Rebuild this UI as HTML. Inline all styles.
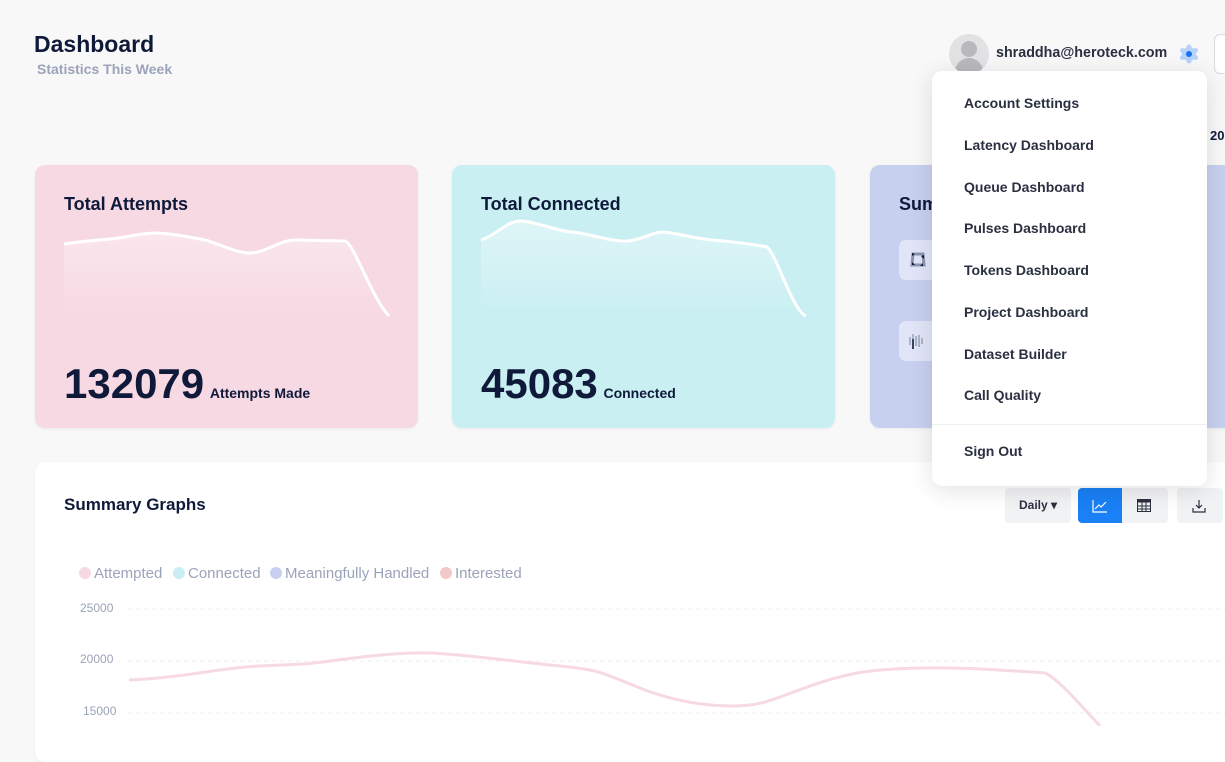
<!DOCTYPE html>
<html><head><meta charset="utf-8"><style>
*{box-sizing:border-box;margin:0;padding:0}
body{width:1225px;height:726px;overflow:hidden;background:#f8f8f9;font-family:"Liberation Sans",sans-serif;position:relative;color:#0f1a3a}
.abs{position:absolute}
.card{position:absolute;top:165px;height:263px;border-radius:10px;box-shadow:0 1px 3px rgba(0,0,0,.06)}
.ct{position:absolute;left:29px;top:29px;font-size:18px;font-weight:bold;color:#0f1a3a}
.big{position:absolute;left:29px;top:195px;font-size:42px;font-weight:bold;color:#0f1a3a;white-space:nowrap}
.big span{font-size:14px;margin-left:-6px}
.menu{position:absolute;left:932px;top:71px;width:275px;height:415px;background:#fff;border-radius:10px;box-shadow:0 4px 24px rgba(0,0,0,.12)}
.menu div{position:absolute;left:32px;font-size:14px;font-weight:bold;color:#2a3040}
.lg{position:absolute;top:565px;font-size:15px;color:#9aa3b8;white-space:nowrap}
.lg i{position:absolute;left:-15px;top:2px;width:12px;height:12px;border-radius:50%}
</style></head><body>
<div class="abs" style="left:34px;top:31px;font-size:23px;font-weight:bold;color:#0f1a3a">Dashboard</div>
<div class="abs" style="left:37px;top:61px;font-size:14px;font-weight:bold;color:#9aa3b8">Statistics This Week</div>
<div class="abs" style="left:949px;top:34px;width:40px;height:40px;border-radius:50%;background:#e2e2e4;overflow:hidden">
 <div class="abs" style="left:12px;top:7px;width:16px;height:16px;border-radius:50%;background:#b9b9bd"></div>
 <div class="abs" style="left:6px;top:24px;width:28px;height:20px;border-radius:14px 14px 0 0;background:#b9b9bd"></div></div>
<div class="abs" style="left:996px;top:45px;font-size:14.3px;font-weight:bold;color:#2a3040">shraddha@heroteck.com</div>
<svg class="abs" style="left:1179px;top:44px" width="20" height="20" viewBox="0 0 20 20"><g fill="#b8d3fb"><circle cx="10" cy="10" r="7"/><circle cx="10" cy="3" r="2.5"/><circle cx="10" cy="17" r="2.5"/><circle cx="3.5" cy="6.5" r="2.5"/><circle cx="16.5" cy="6.5" r="2.5"/><circle cx="3.5" cy="13.5" r="2.5"/><circle cx="16.5" cy="13.5" r="2.5"/></g><circle cx="10" cy="10" r="3" fill="#1a73f0"/></svg>
<div class="abs" style="left:1214px;top:34px;width:30px;height:40px;border:1px solid #d8dbe2;border-radius:6px;background:#fff"></div>
<div class="abs" style="left:1210px;top:128px;font-size:13px;font-weight:bold">20</div>

<div class="card" style="left:35px;width:383px;background:#f7d9e3">
 <div class="ct">Total Attempts</div>
 <svg class="abs" style="left:0;top:0" width="383" height="263"><defs><linearGradient id="g1" x1="0" y1="0" x2="0" y2="1"><stop offset="0" stop-color="#fff" stop-opacity=".35"/><stop offset="1" stop-color="#fff" stop-opacity="0"/></linearGradient></defs>
 <path d="M29 79 C50 76 60 75 75 74 S105 68 120 68 S160 73 170 75 S200 88 215 88 S245 75 260 75 L310 76 C320 80 335 130 354 151 L354 150 L29 150Z" fill="url(#g1)"/>
 <path d="M29 79 C50 76 60 75 75 74 S105 68 120 68 S160 73 170 75 S200 88 215 88 S245 75 260 75 L310 76 C320 80 335 130 354 151" fill="none" stroke="#fff" stroke-width="3"/></svg>
 <div class="big">132079 <span>Attempts Made</span></div>
</div>
<div class="card" style="left:452px;width:383px;background:#c9eff2">
 <div class="ct">Total Connected</div>
 <svg class="abs" style="left:0;top:0" width="383" height="263"><defs><linearGradient id="g2" x1="0" y1="0" x2="0" y2="1"><stop offset="0" stop-color="#fff" stop-opacity=".4"/><stop offset="1" stop-color="#fff" stop-opacity="0"/></linearGradient></defs>
 <path d="M29 75 C45 70 55 55 70 56 S105 66 120 67 S160 77 175 76 S200 67 210 67 S245 74 260 75 S300 79 315 82 C325 90 340 145 354 151 L29 151Z" fill="url(#g2)"/>
 <path d="M29 75 C45 70 55 55 70 56 S105 66 120 67 S160 77 175 76 S200 67 210 67 S245 74 260 75 S300 79 315 82 C325 90 340 145 354 151" fill="none" stroke="#fff" stroke-width="3"/></svg>
 <div class="big">45083 <span>Connected</span></div>
</div>
<div class="card" style="left:870px;width:400px;background:#c8d0f0">
 <div class="ct">Summ</div>
 <div class="abs" style="left:29px;top:75px;width:40px;height:40px;background:#e0e5f7;border-radius:7px"><svg style="margin:11px 0 0 10px" width="18" height="18"><path d="M4 3H14L15 14H3Z" fill="none" stroke="#8a95b0" stroke-width="3"/><path d="M3 2L6 3L3 5ZM15 4L15 8L12 5ZM14 15L11 15L14 12ZM3 14L3 11L6 14Z" fill="#0f1a3a"/></svg></div>
 <div class="abs" style="left:29px;top:156px;width:40px;height:40px;background:#e0e5f7;border-radius:7px"><svg style="margin:10px 0 0 10px" width="20" height="20"><path d="M1 6V14M4 3V18M7 5V15M10 4V16M13 7V13" stroke="#9aa3b8" stroke-width="1.5"/><path d="M4 8V18" stroke="#0f1a3a" stroke-width="1.5"/></svg></div>
</div>

<div class="abs" style="left:35px;top:462px;width:1220px;height:300px;background:#fff;border-radius:10px;box-shadow:0 1px 3px rgba(0,0,0,.05)"></div>
<div class="abs" style="left:64px;top:495px;font-size:17px;font-weight:bold;color:#0f1a3a">Summary Graphs</div>
<div class="abs" style="left:1005px;top:488px;width:66px;height:35px;background:#f1f2f4;border-radius:4px;font-size:12px;font-weight:bold;color:#2a3040;padding:10px 0 0 14px">Daily ▾</div>
<div class="abs" style="left:1078px;top:488px;width:44px;height:35px;background:#1a80f5;border-radius:4px 0 0 4px"><svg style="margin:11px 0 0 14px" width="16" height="14"><path d="M1 1V13H15M3 10L7 6L9 8L14 3" fill="none" stroke="#fff" stroke-width="1.2"/></svg></div>
<div class="abs" style="left:1122px;top:488px;width:46px;height:35px;background:#f1f2f4;border-radius:0 4px 4px 0"><svg style="margin:11px 0 0 15px" width="14" height="13"><rect x=".5" y=".5" width="13" height="12" fill="none" stroke="#2a3040"/><rect x=".5" y=".5" width="13" height="3" fill="#2a3040"/><path d="M5 0V13M9 0V13M0 7H14M0 10H14" stroke="#2a3040"/></svg></div>
<div class="abs" style="left:1177px;top:488px;width:46px;height:35px;background:#f1f2f4;border-radius:4px"><svg style="margin:11px 0 0 15px" width="14" height="14"><path d="M7 1V9M4 6L7 9L10 6M1 9V13H13V9" fill="none" stroke="#2a3040" stroke-width="1.2"/></svg></div>

<div class="lg" style="left:94px"><i style="background:#f7d9e3"></i>Attempted</div>
<div class="lg" style="left:188px"><i style="background:#c9eff2"></i>Connected</div>
<div class="lg" style="left:285px"><i style="background:#c8d0f0"></i>Meaningfully Handled</div>
<div class="lg" style="left:455px"><i style="background:#f2c9c9"></i>Interested</div>
<div class="abs" style="left:80px;top:601px;font-size:12px;color:#9aa3b8">25000</div>
<div class="abs" style="left:80px;top:652px;font-size:12px;color:#9aa3b8">20000</div>
<div class="abs" style="left:83px;top:704px;font-size:12px;color:#9aa3b8">15000</div>
<svg class="abs" style="left:0;top:0" width="1225" height="726">
<path d="M128 609H1225M128 661H1225M128 713H1225" stroke="#eee" stroke-dasharray="4 4"/>
<path d="M129 680 C180 678 220 668 260 666 S300 665 330 661 S400 652 430 653 S520 662 560 666 S600 672 640 688 S720 708 750 705 S820 675 880 670 S1000 670 1045 673 C1060 680 1085 710 1100 726" fill="none" stroke="#f7d9e3" stroke-width="3"/></svg>

<div class="menu">
 <div style="top:24px">Account Settings</div>
 <div style="top:66px">Latency Dashboard</div>
 <div style="top:108px">Queue Dashboard</div>
 <div style="top:149px">Pulses Dashboard</div>
 <div style="top:191px">Tokens Dashboard</div>
 <div style="top:233px">Project Dashboard</div>
 <div style="top:275px">Dataset Builder</div>
 <div style="top:316px">Call Quality</div>
 <span class="abs" style="left:0;top:353px;width:275px;height:1px;background:#eceef2"></span>
 <div style="top:372px">Sign Out</div>
</div>
</body></html>
